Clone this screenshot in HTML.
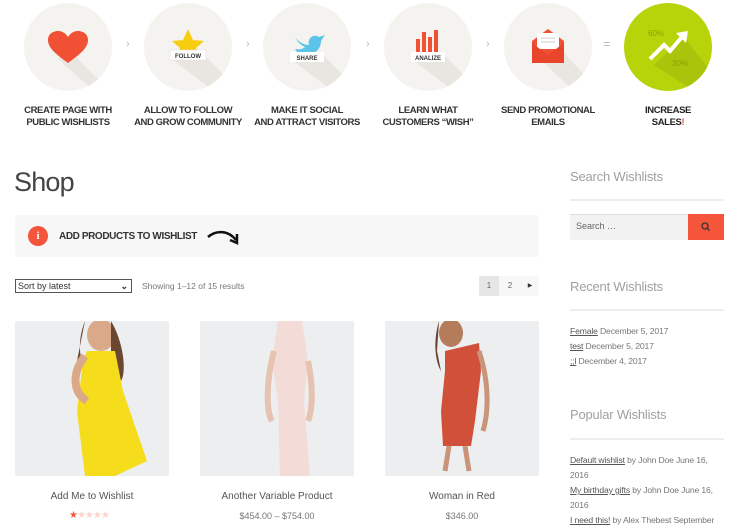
<!DOCTYPE html>
<html><head><meta charset="utf-8"><style>
*{margin:0;padding:0;box-sizing:border-box}
body{width:739px;height:531px;overflow:hidden;background:#fff;font-family:"Liberation Sans",sans-serif;position:relative;color:#444}
.a{position:absolute}
.c{position:absolute;width:88px;height:88px;border-radius:50%;background:#f5f3ef;top:3px;overflow:hidden}
.lb{position:absolute;top:105px;width:130px;text-align:center;font-weight:bold;font-size:9.5px;line-height:12px;color:#333;letter-spacing:-0.4px}
.sep{position:absolute;top:38px;color:#bbb;font-size:11px}
.h{position:absolute;left:570px;font-size:13px;color:#a0a0a0;letter-spacing:-0.2px}
.ln{position:absolute;left:570px;width:154px;height:2px;background:#eee}
.t{position:absolute;left:570px;font-size:8.6px;color:#777;line-height:15px;width:165px;letter-spacing:-0.15px}
.t u{color:#555}
.img{position:absolute;top:321px;width:154px;height:155px;background:#eceef0;border-radius:2px;overflow:hidden}
.pt{position:absolute;top:491px;width:154px;text-align:center;font-size:10px;color:#555}
.pp{position:absolute;top:511px;width:154px;text-align:center;font-size:9px;color:#777}
</style></head><body>
<div class="c" style="left:24px"><svg width="88" height="88"><path d="M44 46 L80 82 L70 88 L34 56Z" fill="#e9e6e1"/><path d="M44 60 C30 50 24 44 24 37 C24 31 29 28 34 28 C39 28 42 31 44 34 C46 31 49 28 54 28 C59 28 64 31 64 37 C64 44 58 50 44 60Z" fill="#f05034"/></svg></div>
<div class="c" style="left:144px"><svg width="88" height="88"><path d="M30 58 L70 88 L88 80 L58 50Z" fill="#e9e6e1"/><polygon points="44,26 49,37 60,38 52,45 54,56 44,51 34,56 36,45 28,38 39,37" fill="#f7cd0f"/><rect x="26" y="47" width="36" height="10" fill="#fff" stroke="#ddd" stroke-width=".5"/><text x="44" y="55" font-size="6" font-weight="bold" text-anchor="middle" fill="#333" font-family="Liberation Sans">FOLLOW</text></svg></div>
<div class="c" style="left:263px"><svg width="88" height="88"><path d="M30 58 L70 88 L88 80 L58 50Z" fill="#e9e6e1"/><path d="M32 34 C36 40 42 42 46 42 C44 36 50 30 56 34 L62 32 L58 38 C58 46 52 52 42 52 C38 52 34 50 32 46 C36 47 40 46 42 44 C37 42 34 38 32 34Z" fill="#5bc4e8"/><rect x="27" y="49" width="34" height="10" fill="#fff"/><text x="44" y="57" font-size="6" font-weight="bold" text-anchor="middle" fill="#333" font-family="Liberation Sans">SHARE</text></svg></div>
<div class="c" style="left:384px"><svg width="88" height="88"><path d="M30 58 L70 88 L88 80 L58 50Z" fill="#e9e6e1"/><rect x="32" y="36" width="4" height="14" fill="#f05034"/><rect x="38" y="29" width="4" height="21" fill="#f05034"/><rect x="44" y="34" width="4" height="16" fill="#f05034"/><rect x="50" y="27" width="4" height="23" fill="#f05034"/><rect x="27" y="49" width="34" height="10" fill="#fff"/><text x="44" y="57" font-size="6" font-weight="bold" text-anchor="middle" fill="#333" font-family="Liberation Sans">ANALIZE</text></svg></div>
<div class="c" style="left:504px"><svg width="88" height="88"><path d="M40 60 L70 88 L88 80 L60 50Z" fill="#e9e6e1"/><path d="M28 38 L44 26 L60 38 L60 60 L28 60Z" fill="#f05034"/><rect x="33" y="30" width="22" height="16" fill="#fff"/><line x1="37" y1="35" x2="51" y2="35" stroke="#ccc"/><line x1="37" y1="39" x2="51" y2="39" stroke="#ccc"/><path d="M28 40 L44 52 L60 40 L60 60 L28 60Z" fill="#e8452c"/></svg></div>
<div class="c" style="left:624px;background:#b7d40b"><svg width="88" height="88"><path d="M30 62 L70 88 L88 70 L60 34Z" fill="#a9c40a"/><path d="M26 56 L40 42 L46 48 L58 34" stroke="#fff" stroke-width="4" fill="none"/><polygon points="52,30 64,28 62,40" fill="#fff"/><text x="24" y="33" font-size="8" fill="#8aa00a" font-family="Liberation Sans">60%</text><text x="48" y="63" font-size="8" fill="#8aa00a" font-family="Liberation Sans">30%</text></svg></div>
<div class="sep" style="left:126px">›</div><div class="sep" style="left:246px">›</div><div class="sep" style="left:366px">›</div><div class="sep" style="left:486px">›</div><div class="sep" style="left:603px;font-size:13px;top:36px">=</div>
<div class="lb" style="left:3px">CREATE PAGE WITH<br>PUBLIC WISHLISTS</div>
<div class="lb" style="left:123px">ALLOW TO FOLLOW<br>AND GROW COMMUNITY</div>
<div class="lb" style="left:242px">MAKE IT SOCIAL<br>AND ATTRACT VISITORS</div>
<div class="lb" style="left:363px">LEARN WHAT<br>CUSTOMERS “WISH”</div>
<div class="lb" style="left:483px">SEND PROMOTIONAL<br>EMAILS</div>
<div class="lb" style="left:603px;color:#222">INCREASE<br>SALES<span style="color:#f05034">!</span></div>
<div class="a" style="left:14px;top:167px;font-size:27px;color:#444;letter-spacing:-0.8px">Shop</div>
<div class="a" style="left:15px;top:215px;width:524px;height:42px;background:#f7f7f7;border-radius:3px"></div>
<div class="a" style="left:28px;top:226px;width:20px;height:20px;border-radius:50%;background:#f4553b;color:#fff;font-size:11px;font-weight:bold;text-align:center;line-height:20px;font-family:'Liberation Serif',serif">i</div>
<div class="a" style="left:59px;top:231px;font-size:10px;font-weight:bold;color:#333;letter-spacing:-0.4px">ADD PRODUCTS TO WISHLIST</div>
<svg class="a" style="left:206px;top:228px" width="36" height="20"><path d="M2 9 C10 2 22 2 30 12" stroke="#111" stroke-width="2.5" fill="none"/><path d="M24 12 L31 15 L31 6" stroke="#111" stroke-width="2.5" fill="none"/></svg>
<div class="a" style="left:15px;top:279px;width:117px;height:14px;border:1px solid #555;font-size:9px;color:#333;padding-left:2px;line-height:12px">Sort by latest<span style="position:absolute;right:3px;top:0;font-weight:bold">⌄</span></div>
<div class="a" style="left:142px;top:281px;font-size:8.5px;color:#777">Showing 1–12 of 15 results</div>
<div class="a" style="left:479px;top:276px;width:60px;height:20px;background:#f7f7f7"></div>
<div class="a" style="left:479px;top:276px;width:20px;height:20px;background:#e6e6e6;font-size:8px;text-align:center;line-height:20px;color:#666">1</div>
<div class="a" style="left:500px;top:276px;width:20px;height:20px;font-size:8px;text-align:center;line-height:20px;color:#666">2</div>
<div class="a" style="left:521px;top:276px;width:18px;height:20px;font-size:6px;text-align:center;line-height:20px;color:#333">▶</div>
<div class="img" style="left:15px"><svg width="154" height="155"><ellipse cx="86" cy="14" rx="14" ry="16" fill="#d9a98a"/><path d="M70 0 C62 20 64 40 72 50 L62 40Z" fill="#6b4630"/><path d="M96 0 C108 20 112 50 106 60 L96 40Z" fill="#6b4630"/><path d="M72 30 L100 30 L108 70 L132 140 L100 155 L70 155 L62 90 L68 40Z" fill="#f6dd1c"/><path d="M70 35 C58 50 56 70 72 80" stroke="#d9a98a" stroke-width="8" fill="none"/></svg></div>
<div class="img" style="left:200px"><svg width="154" height="155"><path d="M78 0 L102 0 L108 40 L104 80 L110 155 L80 155 L78 80 L72 40Z" fill="#f3dcd8"/><path d="M74 30 C66 60 66 90 72 100" stroke="#e6c2b0" stroke-width="6" fill="none"/><path d="M108 40 C114 70 112 90 108 100" stroke="#e6c2b0" stroke-width="6" fill="none"/></svg></div>
<div class="img" style="left:385px"><svg width="154" height="155"><ellipse cx="66" cy="12" rx="12" ry="14" fill="#b57c5c"/><path d="M54 0 C48 20 50 40 56 50 L52 30Z" fill="#6b3f2a"/><path d="M60 30 L94 22 L96 50 L90 100 L86 125 L58 125 L56 90 L60 50Z" fill="#d0503a"/><path d="M64 125 L60 150 M80 125 L84 150" stroke="#c99478" stroke-width="5"/><path d="M94 30 C104 60 104 90 98 110" stroke="#c99478" stroke-width="5" fill="none"/></svg></div>
<div class="pt" style="left:15px">Add Me to Wishlist</div>
<div class="pt" style="left:200px">Another Variable Product</div>
<div class="pt" style="left:385px">Woman in Red</div>
<div class="a" style="left:69px;top:510px;font-size:10px;letter-spacing:-1px"><span style="color:#f4553b">★</span><span style="color:#fbd3cb">★★★★</span></div>
<div class="pp" style="left:200px">$454.00 – $754.00</div>
<div class="pp" style="left:385px">$346.00</div>
<div class="h" style="top:169px">Search Wishlists</div>
<div class="ln" style="top:199px"></div>
<div class="a" style="left:570px;top:214px;width:118px;height:26px;background:#f2f2f2;border-top:1px solid #ddd;font-size:9px;color:#666;padding:6px 0 0 6px">Search …</div>
<div class="a" style="left:688px;top:214px;width:36px;height:26px;background:#f4553b"><svg width="36" height="26"><circle cx="17" cy="12" r="3" stroke="#333" stroke-width="1.3" fill="none"/><line x1="19" y1="14" x2="21.5" y2="16.5" stroke="#333" stroke-width="1.3"/></svg></div>
<div class="h" style="top:279px">Recent Wishlists</div>
<div class="ln" style="top:309px"></div>
<div class="t" style="top:324px"><u>Female</u> December 5, 2017<br><u>test</u> December 5, 2017<br><u>;;l</u> December 4, 2017</div>
<div class="h" style="top:407px">Popular Wishlists</div>
<div class="ln" style="top:438px"></div>
<div class="t" style="top:453px"><u>Default wishlist</u> by John Doe June 16,<br>2016<br><u>My birthday gifts</u> by John Doe June 16,<br>2016<br><span style="white-space:nowrap"><u>I need this!</u> by Alex Thebest September</span></div>
</body></html>
